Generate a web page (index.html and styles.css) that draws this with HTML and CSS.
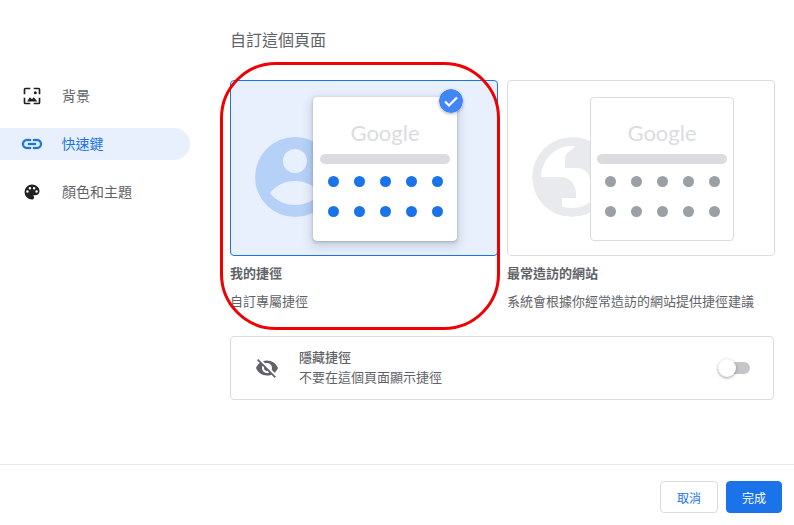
FILE: index.html
```html
<!DOCTYPE html>
<html lang="zh-Hant">
<head>
<meta charset="utf-8">
<title>自訂這個頁面</title>
<link rel="stylesheet" href="styles.css">
</head>
<body>
<div class="dialog">
  <div class="content">
    <nav class="sidebar">
      <div class="nav-item">
        <svg class="nav-icon" viewBox="0 0 24 24"><path d="M10 3H4a1 1 0 0 0-1 1v6M14 3h6a1 1 0 0 1 1 1v6M3 14v6a1 1 0 0 0 1 1h6M21 14v6a1 1 0 0 1-1 1h-6" fill="none" stroke="#202124" stroke-width="2"/><path d="M6 18.500l3.500-5 2.500 2.500 2-2.500 4.500 5z" fill="#202124"/><circle cx="16" cy="8" r="1.800" fill="#202124"/></svg>
        <span>背景</span>
      </div>
      <div class="nav-item active">
        <svg class="nav-icon wide" viewBox="0 0 24 24"><path d="M3.900 12c0-1.710 1.390-3.100 3.100-3.100h4V7H7c-2.760 0-5 2.240-5 5s2.240 5 5 5h4v-1.900H7c-1.710 0-3.100-1.390-3.100-3.100zM8 13h8v-2H8v2zm9-6h-4v1.900h4c1.710 0 3.100 1.390 3.100 3.100s-1.390 3.100-3.100 3.100h-4V17h4c2.760 0 5-2.240 5-5s-2.240-5-5-5z" fill="#1a73e8" stroke="#1a73e8" stroke-width=".3"/></svg>
        <span>快速鍵</span>
      </div>
      <div class="nav-item">
        <svg class="nav-icon" viewBox="0 0 24 24"><path fill-rule="evenodd" d="M12 3a9 9 0 0 0 0 18c1.380 0 2.500-1.120 2.500-2.500 0-.61-.23-1.200-.64-1.670-.08-.1-.13-.21-.13-.33 0-.28.22-.5.500-.5H16c2.760 0 5-2.240 5-5 0-4.420-4.030-8-9-8zM6.500 13a1.500 1.500 0 1 1 0-3 1.500 1.500 0 0 1 0 3zm3-4a1.500 1.500 0 1 1 0-3 1.500 1.500 0 0 1 0 3zm5 0a1.500 1.500 0 1 1 0-3 1.500 1.500 0 0 1 0 3zm3 4a1.500 1.500 0 1 1 0-3 1.500 1.500 0 0 1 0 3z" fill="#202124"/></svg>
        <span>顏色和主題</span>
      </div>
    </nav>
    <main class="panel">
      <h1 class="title">自訂這個頁面</h1>
      <div class="options">
        <section class="option">
          <div class="card selected">
            <svg class="art" viewBox="0 0 80 80"><circle cx="40" cy="40" r="40" fill="#b5d1f8"/><circle cx="40" cy="24" r="12" fill="#e8f0fe"/><path d="M15 56c6-8 15-12 25-12s19 4 25 12c-6 8-15 12-25 12s-19-4-25-12z" fill="#e8f0fe"/></svg>
            <div class="mini">
              <div class="brand">Google</div>
              <div class="searchbar"></div>
              <div class="dots">
                <i></i><i></i><i></i><i></i><i></i>
                <i></i><i></i><i></i><i></i><i></i>
              </div>
            </div>
            <svg class="badge" viewBox="0 0 24 24"><circle cx="12" cy="12" r="12" fill="#4285f4"/><path d="M6 12.500l4 4 8-8" fill="none" stroke="#fff" stroke-width="2.200"/></svg>
          </div>
          <h2 class="opt-name">我的捷徑</h2>
          <p class="opt-desc">自訂專屬捷徑</p>
        </section>
        <section class="option">
          <div class="card">
            <svg class="art" viewBox="0 0 80 80"><defs><clipPath id="globe-clip"><circle cx="40" cy="40" r="40"/></clipPath></defs><g clip-path="url(#globe-clip)"><circle cx="40" cy="40" r="40" fill="#e8eaed"/><circle cx="40" cy="40" r="31" fill="#fff"/><path d="M45 6C42 13 33 15 33 21V31H46C52 31 58 37 58 43H80V0H45z" fill="#e8eaed"/><path d="M4 40H30C38 40 44 48 44 56V61H30V80H4z" fill="#e8eaed"/></g></svg>
            <div class="mini">
              <div class="brand">Google</div>
              <div class="searchbar"></div>
              <div class="dots">
                <i></i><i></i><i></i><i></i><i></i>
                <i></i><i></i><i></i><i></i><i></i>
              </div>
            </div>
          </div>
          <h2 class="opt-name">最常造訪的網站</h2>
          <p class="opt-desc">系統會根據你經常造訪的網站提供捷徑建議</p>
        </section>
      </div>
      <div class="hide-row">
        <svg class="hide-icon" viewBox="0 0 24 24"><path d="M12 7c2.760 0 5 2.240 5 5 0 .65-.13 1.260-.36 1.830l2.920 2.920c1.510-1.260 2.700-2.890 3.430-4.750-1.730-4.390-6-7.500-11-7.500-1.400 0-2.740.25-3.980.7l2.160 2.160C10.740 7.130 11.350 7 12 7zM2 4.270l2.280 2.280.46.46C3.080 8.300 1.780 10.020 1 12c1.730 4.390 6 7.500 11 7.500 1.550 0 3.030-.3 4.380-.84l.42.42L19.730 22 21 20.730 3.270 3 2 4.270zM7.530 9.800l1.550 1.550c-.05.21-.08.43-.08.65 0 1.660 1.340 3 3 3 .22 0 .44-.03.65-.08l1.550 1.550c-.67.33-1.410.53-2.200.53-2.760 0-5-2.240-5-5 0-.79.2-1.530.53-2.200z" fill="#5f6368"/></svg>
        <div class="hide-text">
          <div class="hide-name">隱藏捷徑</div>
          <div class="hide-desc">不要在這個頁面顯示捷徑</div>
        </div>
        <div class="toggle"><span class="knob"></span></div>
      </div>
    </main>
  </div>
  <footer class="footer">
    <button class="btn">取消</button>
    <button class="btn primary">完成</button>
  </footer>
  <div class="annotation"></div>
</div>
</body>
</html>
```
FILE: styles.css
```css
* { box-sizing: border-box; }
html, body { margin: 0; padding: 0; background: #fff; }
body { font-family: "Liberation Sans", "Noto Sans CJK TC", sans-serif; color: #5f6368; font-size: 13px; }
.dialog { position: relative; width: 794px; height: 525px; overflow: hidden; display: flex; flex-direction: column; }
.content { display: flex; height: 465px; border-bottom: 1px solid #e8eaed; }
.sidebar { width: 190px; padding-top: 80px; display: flex; flex-direction: column; gap: 16px; flex: none; }
.nav-item { height: 32px; display: flex; align-items: center; padding-left: 22px; gap: 20px; font-size: 14px; color: #5f6368; border-radius: 0 16px 16px 0; }
.nav-item span { margin-bottom: 2px; }
.nav-item.active { background: #e8f0fe; color: #1a73e8; }
.nav-icon { width: 20px; height: 20px; flex: none; }
.nav-icon.wide { width: 24px; height: 24px; margin: 0 -2.500px 0 -2px; }
.panel { flex: 1; padding: 31px 20px 0 40px; }
.title { margin: 0; font-size: 16px; font-weight: 400; line-height: 20px; color: #5f6368; }
.options { display: flex; gap: 9px; margin-top: 29px; }
.option { width: 268px; }
.card { position: relative; width: 268px; height: 176px; border: 1px solid #dadce0; border-radius: 4px; padding: 16px 40px 0 0; display: flex; justify-content: flex-end; align-items: flex-start; }
.card.selected { background: #e8f0fe; border-color: #1a73e8; }
.art { position: absolute; left: 24px; top: 56px; width: 80px; height: 80px; }
.mini { position: relative; width: 144px; height: 144px; background: #fff; border: 1px solid #dadce0; border-radius: 4px; padding: 0 6px; display: flex; flex-direction: column; align-items: center; }
.card.selected .mini { border-color: #fff; box-shadow: 0 1px 3px rgba(60,64,67,.3), 0 4px 8px 3px rgba(60,64,67,.15); }
.brand { margin-top: 20px; height: 30px; line-height: 30px; font-family: "Lato", sans-serif; font-size: 22px; color: #dadce0; }
.searchbar { width: 100%; height: 10px; margin-top: 6px; border-radius: 5px; background: #dadce0; }
.dots { display: grid; grid-template-columns: repeat(5, 11px); column-gap: 15px; row-gap: 19px; margin-top: 12px; }
.dots i { width: 11px; height: 11px; border-radius: 50%; background: #9aa0a6; display: block; }
.selected .dots i { background: #1a73e8; }
.badge { position: absolute; top: 8px; right: 34px; width: 24px; height: 24px; border-radius: 50%; box-shadow: 0 1px 3px rgba(60,64,67,.4); }
.opt-name { margin: 10px 0 0; font-size: 13px; font-weight: 700; line-height: 16px; color: #5f6368; }
.opt-desc { margin: 12px 0 0; font-size: 13px; line-height: 16px; color: #5f6368; }
.hide-row { display: flex; align-items: center; width: 544px; height: 64px; margin-top: 26px; border: 1px solid #dadce0; border-radius: 4px; padding: 0 23px 0 24px; }
.hide-icon { width: 24px; height: 24px; flex: none; }
.hide-text { margin-left: 20px; flex: 1; line-height: 20px; }
.hide-name { font-weight: 500; }
.toggle { position: relative; width: 32px; height: 12px; background: #c4c6c9; border-radius: 6px; }
.knob { position: absolute; left: 0; top: -3px; width: 18px; height: 18px; border-radius: 50%; background: #fff; box-shadow: 0 1px 3px rgba(60,64,67,.5); }
.footer { flex: 1; display: flex; justify-content: flex-end; align-items: flex-start; gap: 8px; padding: 16px 12px 0 0; }
.btn { width: 58px; height: 32px; font: inherit; font-size: 12px; background: #fff; color: #1a73e8; border: 1px solid #dadce0; border-radius: 4px; padding: 0; }
.btn.primary { width: 56px; background: #1a73e8; border-color: #1a73e8; color: #fff; }
.annotation { position: absolute; left: 220px; top: 62px; width: 280px; height: 268px; border: 3px solid #f00000; border-radius: 56px; pointer-events: none; }
```
